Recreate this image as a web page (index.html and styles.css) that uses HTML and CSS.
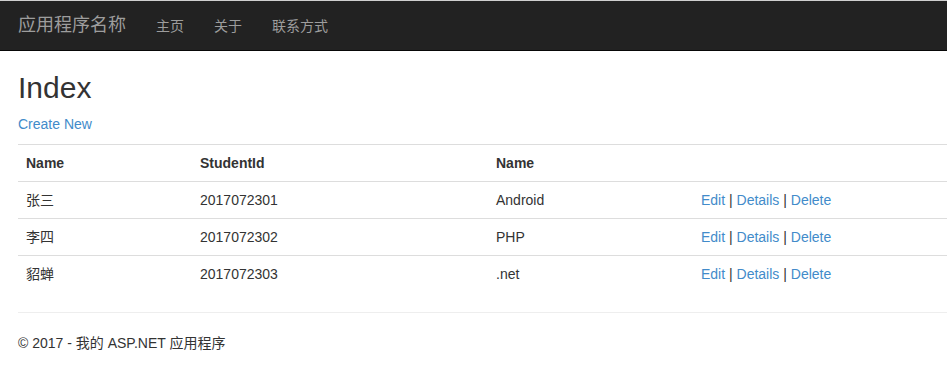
FILE: index.html
```html
<!DOCTYPE html>
<html lang="zh-CN">
<head>
<meta charset="utf-8">
<title>Index - 我的 ASP.NET 应用程序</title>
<link rel="stylesheet" href="styles.css">
</head>
<body>
<nav class="navbar">
  <a class="brand" href="#">应用程序名称</a>
  <ul class="nav">
    <li><a href="#">主页</a></li>
    <li><a href="#">关于</a></li>
    <li><a href="#">联系方式</a></li>
  </ul>
</nav>
<div class="body-content">
  <h2 class="title">Index</h2>
  <p class="create"><a href="#">Create New</a></p>
  <table class="table">
    <colgroup>
      <col class="c1"><col class="c2"><col class="c3"><col class="c4">
    </colgroup>
    <tr>
      <th>Name</th>
      <th>StudentId</th>
      <th>Name</th>
      <th></th>
    </tr>
    <tr>
      <td>张三</td>
      <td>2017072301</td>
      <td>Android</td>
      <td><a href="#">Edit</a> | <a href="#">Details</a> | <a href="#">Delete</a></td>
    </tr>
    <tr>
      <td>李四</td>
      <td>2017072302</td>
      <td>PHP</td>
      <td><a href="#">Edit</a> | <a href="#">Details</a> | <a href="#">Delete</a></td>
    </tr>
    <tr>
      <td>貂蝉</td>
      <td>2017072303</td>
      <td>.net</td>
      <td><a href="#">Edit</a> | <a href="#">Details</a> | <a href="#">Delete</a></td>
    </tr>
  </table>
  <hr class="rule">
  <footer class="footer">
    <p>&copy; 2017 - 我的 ASP.NET 应用程序</p>
  </footer>
</div>
</body>
</html>
```

FILE: styles.css
```css
* { box-sizing: border-box; }
html, body { margin: 0; padding: 0; }
body {
  font-family: "Liberation Sans", Arial, "Noto Sans CJK SC", sans-serif;
  font-size: 14px;
  line-height: 20px;
  color: #333;
  background: #fff;
}
a { color: #428bca; text-decoration: none; }

.navbar {
  display: flex;
  align-items: center;
  height: 51px;
  background: #222;
  border-top: 1px solid #cfcfcf;
  border-bottom: 1px solid #080808;
  padding-left: 3px;
}
.brand {
  display: block;
  padding: 14px 15px 15px;
  font-size: 18px;
  line-height: 20px;
  color: #9d9d9d;
}
.nav {
  display: flex;
  list-style: none;
  margin: 0;
  padding: 0;
}
.nav a {
  display: block;
  padding: 15px 15px;
  line-height: 20px;
  color: #9d9d9d;
}

.body-content {
  padding-left: 18px;
}
.title {
  margin: 20px 0 10px;
  font-size: 30px;
  font-weight: 500;
  line-height: 33px;
}
.create { margin: 0 0 10px; }

.table {
  width: 100%;
  border-collapse: collapse;
  border-spacing: 0;
  margin-bottom: 20px;
}
.c1 { width: 174px; }
.c2 { width: 296px; }
.c3 { width: 205px; }
.table th, .table td {
  padding: 8px;
  line-height: 20px;
  text-align: left;
  vertical-align: top;
  border-top: 1px solid #ddd;
}
.table th { font-weight: bold; }

.rule {
  margin: 20px 0;
  border: 0;
  border-top: 1px solid #eee;
  height: 0;
}
.footer p { margin: 0 0 10px; }
```
